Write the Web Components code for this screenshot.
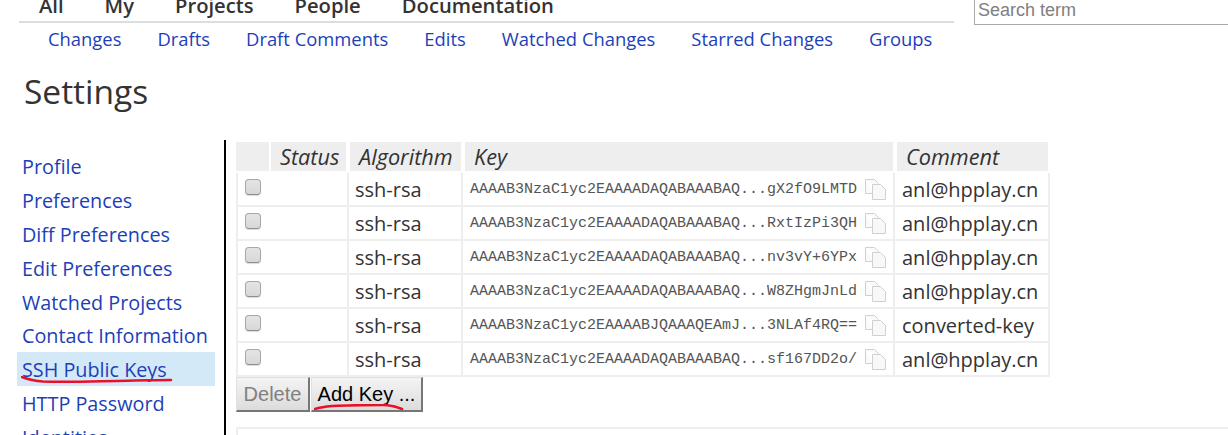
<!DOCTYPE html>
<html>
<head>
<meta charset="utf-8">
<title>Settings</title>
<style>
  html, body { margin: 0; padding: 0; background: #fff; height: 435px; overflow: hidden; }
  body { font-family: "Open Sans", "Noto Sans", sans-serif; color: #333; }
</style>
</head>
<body>
<script>
const FONT = '"Open Sans", "Noto Sans", sans-serif';

class TopBar extends HTMLElement
{
    constructor()
    {
        super();
        const Shadow = this.attachShadow({mode: "open"});
        const Main = ["All", "My", "Projects", "People", "Documentation"];
        const Sub = ["Changes", "Drafts", "Draft Comments", "Edits", "Watched Changes", "Starred Changes", "Groups"];
        Shadow.innerHTML = `
        <div class="Left">
            <div class="Main">${Main.map(t => `<span>${t}</span>`).join("")}</div>
            <div class="Sub">${Sub.map(t => `<span>${t}</span>`).join("")}</div>
        </div>
        <input class="Search" placeholder="Search term">
        <style>
            :host {
                display: flex;
                height: 53px;
                margin-top: -3px;
                font-family: ${FONT};
            }

            .Left {
                width: 935px;
                margin-left: 19px;
            }

            .Main {
                display: flex;
                gap: 41px;
                height: 24px;
                padding-left: 20px;
                border-bottom: 2px solid #ddd;
                font-size: 20.2px;
                font-weight: 600;
                line-height: 17px;
                color: #333;
            }

            .Sub {
                display: flex;
                gap: 36px;
                padding: 4px 0 0 29px;
                font-size: 18.4px;
                line-height: 24px;
                color: #1c3fb8;
            }

            .Search {
                box-sizing: border-box;
                width: 254px;
                height: 28px;
                margin: 0 0 0 20px;
                padding: 0 3px;
                border: 0;
                border-left: 1px solid #a9a9a9;
                border-bottom: 1px solid #a9a9a9;
                outline: none;
                font-family: "Liberation Sans", sans-serif;
                font-size: 18px;
            }

            .Search::placeholder {
                color: #808080;
                opacity: 1;
            }
        </style>
        `;
    }
}

class SideNav extends HTMLElement
{
    constructor()
    {
        super();
        const Shadow = this.attachShadow({mode: "open"});
        const Items = ["Profile", "Preferences", "Diff Preferences", "Edit Preferences", "Watched Projects", "Contact Information", "SSH Public Keys", "HTTP Password", "Identities"];
        Shadow.innerHTML = `
        ${Items.map(t => `<div class="Item${t === "SSH Public Keys" ? " On" : ""}">${t}</div>`).join("")}
        <svg class="Mark" width="160" height="12" viewBox="0 0 160 12">
            <path d="M1 1 C6 3 14 5 22 5.5 C50 6.5 80 5 106 4.7 C122 4.5 138 4 150 4" fill="none" stroke="#e8102a" stroke-width="2.5" stroke-linecap="round"/>
        </svg>
        <style>
            :host {
                display: block;
                position: relative;
                box-sizing: border-box;
                width: 224px;
                padding: 9px 9px 0 17px;
                font-family: ${FONT};
                font-size: 19.8px;
                color: #1c3fb8;
            }

            .Item {
                box-sizing: border-box;
                height: 33.9px;
                padding-left: 5px;
                line-height: 35px;
                white-space: nowrap;
            }

            .On {
                background: #d4e9f7;
            }

            .Mark {
                position: absolute;
                left: 21px;
                top: 236px;
            }
        </style>
        `;
    }
}

class KeyRow extends HTMLElement
{
    constructor()
    {
        super();
        const Shadow = this.attachShadow({mode: "open"});
        Shadow.innerHTML = `
        <div class="Cell Check"><span class="Box"></span></div>
        <div class="Cell Algo">ssh-rsa</div>
        <div class="Cell Key">
            <span class="Text"></span>
            <svg width="22" height="21" viewBox="0 0 22 21">
                <path d="M.5 .5h9l4 4v3M.5 .5v14h7" fill="#fafafa" stroke="#d0d0d0"/>
                <path d="M7.5 5.5h8l5 5v10h-13z" fill="#f8f8f8" stroke="#d0d0d0"/>
            </svg>
        </div>
        <div class="Cell Comment"></div>
        <style>
            :host {
                display: grid;
                grid-template-columns: 111px 114px 432px 157px;
                height: 34px;
                font-family: ${FONT};
                font-size: 20px;
                color: #333;
            }

            .Cell {
                box-sizing: border-box;
                display: flex;
                align-items: center;
                height: 34px;
                border: solid #eee;
                border-width: 0 0 2px 2px;
            }

            .Check {
                padding: 0 0 4px 7px;
            }

            .Box {
                box-sizing: border-box;
                width: 16px;
                height: 16px;
                border: 1px solid #a8a8a8;
                border-bottom-color: #8e8e8e;
                border-radius: 4px;
                background: linear-gradient(#e4e4e4, #d8d8d8);
                box-shadow: 0 1px 1px rgba(0, 0, 0, .15);
            }

            .Algo {
                padding-left: 6px;
            }

            .Key {
                gap: 8px;
                padding: 0 0 0 7px;
                font-family: "Liberation Mono", monospace;
                font-size: 15px;
                color: #555;
            }

            .Key svg {
                flex: none;
            }

            .Comment {
                padding-left: 7px;
                border-right-width: 2px;
            }
        </style>
        `;
    }

    connectedCallback() {
        this.shadowRoot.querySelector(".Text").textContent = this.getAttribute("key-text");
        this.shadowRoot.querySelector(".Comment").textContent = this.getAttribute("comment");
    }
}

class KeyTable extends HTMLElement
{
    constructor()
    {
        super();
        const Shadow = this.attachShadow({mode: "open"});
        Shadow.innerHTML = `
        <div class="Head">
            <div style="width:33px;margin-right:-2px"></div>
            <div style="width:75px">Status</div>
            <div style="width:111px">Algorithm</div>
            <div style="width:428px">Key</div>
            <div style="width:151px">Comment</div>
        </div>
        <slot></slot>
        <style>
            :host {
                display: block;
                font-family: ${FONT};
            }

            .Head {
                display: flex;
                gap: 4px;
                height: 31px;
                padding-bottom: 2px;
                box-sizing: border-box;
                font-size: 21.7px;
                font-style: italic;
                line-height: 29px;
                color: #333;
            }

            .Head div {
                box-sizing: border-box;
                height: 29px;
                padding-left: 9px;
                background: #eee;
                white-space: nowrap;
            }
        </style>
        `;
    }
}

class ActionBar extends HTMLElement
{
    constructor()
    {
        super();
        const Shadow = this.attachShadow({mode: "open"});
        Shadow.innerHTML = `
        <button disabled>Delete</button>
        <button class="Add">Add Key ...</button>
        <svg class="Mark" width="92" height="10" viewBox="0 0 92 10">
            <path d="M1 5 C8 3 14 2.5 19 2 C36 1 52 1 69 1 C77 1 83 3 88 5" fill="none" stroke="#e8102a" stroke-width="2.5" stroke-linecap="round"/>
        </svg>
        <style>
            :host {
                display: flex;
                position: relative;
                gap: 1px;
                height: 35px;
            }

            button {
                box-sizing: border-box;
                height: 35px;
                padding: 0;
                border: solid;
                border-width: 1px 2px 2px 1px;
                border-color: #e0e0e0 #777 #777 #e0e0e0;
                background: linear-gradient(#f4f4f4, #dcdcdc);
                font-family: "Liberation Sans", sans-serif;
                font-size: 20px;
                color: #000;
            }

            button[disabled] {
                width: 74px;
                color: #808080;
            }

            .Add {
                width: 112px;
            }

            .Mark {
                position: absolute;
                left: 78px;
                top: 27px;
            }
        </style>
        `;
    }
}

class SettingsPage extends HTMLElement
{
    constructor()
    {
        super();
        const Shadow = this.attachShadow({mode: "open"});
        Shadow.innerHTML = `
        <top-bar></top-bar>
        <h1>Settings</h1>
        <div class="Body">
            <side-nav></side-nav>
            <div class="Main">
                <slot></slot>
                <action-bar></action-bar>
                <div class="Next"></div>
            </div>
        </div>
        <style>
            :host {
                display: block;
                height: 435px;
                overflow: hidden;
                font-family: ${FONT};
            }

            h1 {
                height: 90px;
                margin: 0 0 0 24px;
                font-size: 33.5px;
                font-weight: 400;
                line-height: 82px;
                color: #333;
            }

            .Body {
                display: flex;
                height: 300px;
            }

            .Main {
                flex: 1;
                min-width: 0;
                padding: 2px 0 0 10px;
                border-left: 2px solid #000;
            }

            .Next {
                height: 20px;
                margin-top: 15px;
                border: solid #eee;
                border-width: 2px 0 0 2px;
            }
        </style>
        `;
    }
}

customElements.define("top-bar", TopBar);
customElements.define("side-nav", SideNav);
customElements.define("key-row", KeyRow);
customElements.define("key-table", KeyTable);
customElements.define("action-bar", ActionBar);
customElements.define("settings-page", SettingsPage);
</script>
<settings-page>
    <key-table>
        <key-row key-text="AAAAB3NzaC1yc2EAAAADAQABAAABAQ...gX2fO9LMTD" comment="anl@hpplay.cn"></key-row>
        <key-row key-text="AAAAB3NzaC1yc2EAAAADAQABAAABAQ...RxtIzPi3QH" comment="anl@hpplay.cn"></key-row>
        <key-row key-text="AAAAB3NzaC1yc2EAAAADAQABAAABAQ...nv3vY+6YPx" comment="anl@hpplay.cn"></key-row>
        <key-row key-text="AAAAB3NzaC1yc2EAAAADAQABAAABAQ...W8ZHgmJnLd" comment="anl@hpplay.cn"></key-row>
        <key-row key-text="AAAAB3NzaC1yc2EAAAABJQAAAQEAmJ...3NLAf4RQ==" comment="converted-key"></key-row>
        <key-row key-text="AAAAB3NzaC1yc2EAAAADAQABAAABAQ...sf167DD2o/" comment="anl@hpplay.cn"></key-row>
    </key-table>
</settings-page>
</body>
</html>
